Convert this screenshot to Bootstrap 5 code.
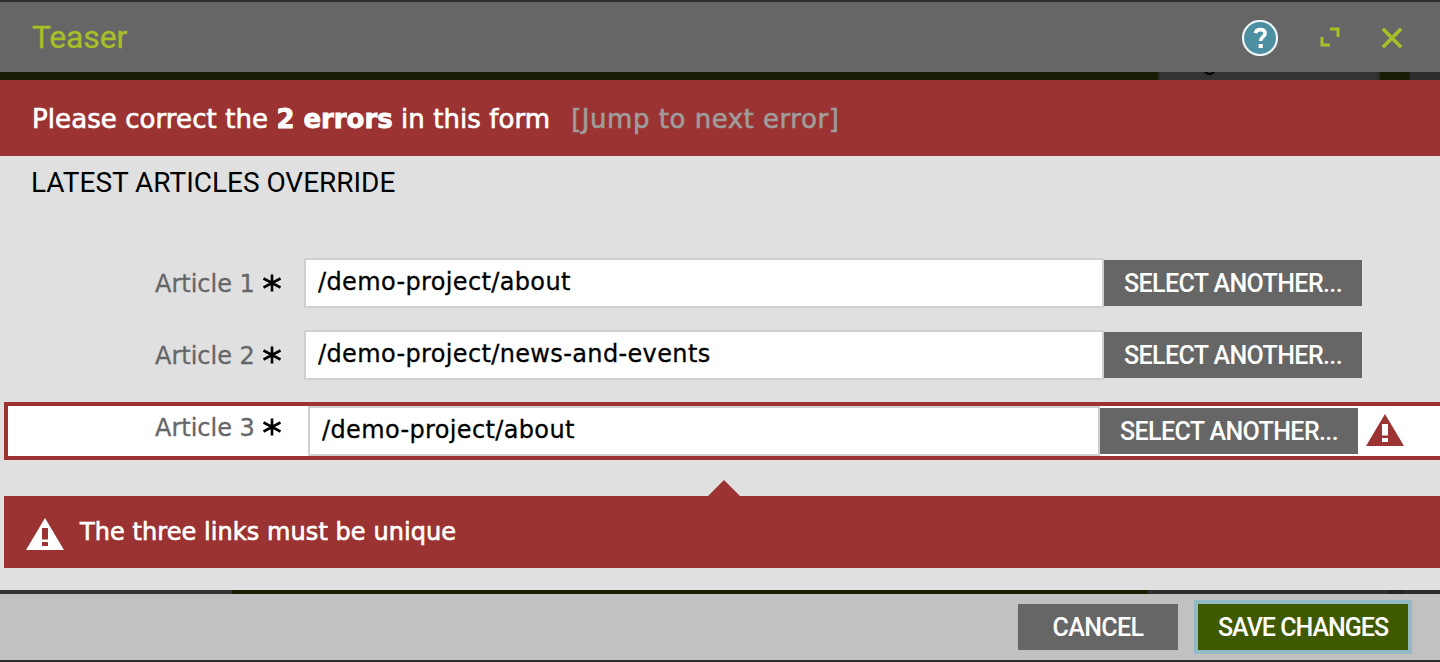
<!DOCTYPE html>
<html lang="en">
<head>
<meta charset="utf-8">
<title>Teaser</title>
<meta name="viewport" content="width=device-width, initial-scale=1">
<link href="https://cdn.jsdelivr.net/npm/bootstrap@5.3.0/dist/css/bootstrap.min.css" rel="stylesheet">
<style>
  :root { --brick: #9a3332; --steel: #666; --lime: #a8bf27; }
  body { font-family: "DejaVu Sans", Verdana, sans-serif; font-size: 24px; line-height: 30px; color: #000; background: #e0e0e0; height: 662px; overflow: hidden; }
  .din { font-family: Roboto, sans-serif; }
  .edge { height: 2px; background: #2d2d2d; }
  .dialog-head { height: 70px; background: var(--steel); padding: 2px 37px 0 32px; }
  .dialog-title { font-size: 32px; line-height: 40px; color: var(--lime); letter-spacing: -.2px; margin-top: -2px; -webkit-text-stroke: .3px currentColor; }
  .help-icon { margin-right: 42px; }
  .expand-icon { margin: 0 41px 3px 0; }
  .behind-top { height: 8px; background: linear-gradient(90deg, #161d02 0 1158px, #2b2b2b 1158px 1160px, #333 1160px 1378px, #2b2b2b 1378px 1380px, #161d02 1380px 1410px, #2d2d2d 1410px); }
  .behind-bottom { height: 4px; background: linear-gradient(90deg, #333 0 232px, #161d02 232px 1148px, #2e2e32 1148px 1388px, #242427 1388px 1404px, #2b2b2e 1404px); }
  .error-bar { height: 76px; background: var(--brick); padding: 2px 0 0 32px; font-size: 26px; letter-spacing: .08px; }
  .error-bar b { letter-spacing: -.05px; -webkit-text-stroke: .8px currentColor; }
  .sturdy { -webkit-text-stroke: .65px currentColor; }
  .jump { color: #a09c9b; margin-left: 21px; letter-spacing: .52px; -webkit-text-stroke: .6px currentColor; }
  .form-area { height: 434px; }
  .section-title { font-size: 28px; line-height: 34px; letter-spacing: -.02px; padding: 10px 0 0 31px; height: 102px; }
  .field-row { height: 50px; margin-bottom: 22px; }
  .field-label { width: 304px; padding: 2px 0 0 155px; color: var(--steel); gap: 8px; height: 50px; }
  .field-label span { -webkit-text-stroke: .3px currentColor; }
  .field-label svg { margin-top: -3px; }
  .field-input.form-control { width: 800px; height: 50px; border: 2px solid #d0d0d0; border-radius: 0; padding: 0 11px 2px 12px; font-size: 24px; letter-spacing: .36px; color: #000; background: #fff; -webkit-text-stroke: .3px currentColor; }
  .dlg-btn.btn { height: 46px; border: 0; border-radius: 0; padding: 1px 0 0; background: var(--steel); color: #fff; font: 500 25px/45px Roboto, sans-serif; letter-spacing: -.6px; white-space: nowrap; }
  .pick { width: 258px; }
  .field-row.bad { height: 58px; margin: 0 0 0 4px; border: 4px solid var(--brick); border-right: 0; background: #fff; }
  .bad .field-label { width: 300px; padding: 0 0 6px 147px; }
  .bad .field-input.form-control { width: 792px; }
  .bad-icon { color: var(--brick); margin-bottom: 2px; }
  .message { height: 72px; margin: 36px 0 0 4px; padding-left: 22px; background: var(--brick); color: #fff; letter-spacing: .07px; }
  .message::before { content: ""; position: absolute; left: 704px; top: -16px; border: 16px solid transparent; border-top: 0; border-bottom-color: var(--brick); }
  .dialog-foot { height: 66px; background: #c1c1c1; padding: 10px 32px 0 0; gap: 20px; }
  .cancel { width: 160px; }
  .dlg-btn.save { width: 210px; letter-spacing: -1px; background: #3e5900; box-shadow: 0 0 0 4px #93b9c4; }
</style>
</head>
<body>
<svg class="d-none">
  <symbol id="star" viewBox="0 0 18 18"><path d="M9 .5v17M.5 4.500l17 9M17.500 4.500L.5 13.500" fill="none" stroke="#000" stroke-width="2.6"/></symbol>
  <symbol id="warn" viewBox="0 0 38 32"><path fill="currentColor" fill-rule="evenodd" d="M19 0L38 32H0zM16 10v11.500h6V10zm0 14v4h6v-4z"/></symbol>
</svg>
<div class="d-flex flex-column">
  <div class="edge"></div>
  <header class="dialog-head d-flex align-items-center justify-content-between">
    <div class="dialog-title din">Teaser</div>
    <div class="d-flex align-items-center">
      <svg class="help-icon" width="36" height="36" viewBox="0 0 36 36"><circle cx="18" cy="18" r="17" fill="#4b8fa0" stroke="#edf4f6" stroke-width="2.2"/><path d="M13.500 13.200c.4-2.400 2.300-3.600 4.800-3.600 2.900 0 4.800 1.400 4.800 3.800 0 3.300-4.500 3.500-4.500 7.600" fill="none" stroke="#fff" stroke-width="3.6"/><path d="M16.600 24h4.200v4h-4.200z" fill="#fff"/></svg>
      <svg class="expand-icon" width="20" height="20" viewBox="0 0 20 20"><path d="M10 2h8v8M2 10v8h8" fill="none" stroke="#a8bf27" stroke-width="3"/></svg>
      <svg width="22" height="22" viewBox="0 0 22 22"><path d="M1.800 1.800l18.400 18.400M20.200 1.800L1.800 20.200" fill="none" stroke="#a8bf27" stroke-width="3.6"/></svg>
    </div>
  </header>
  <div class="behind-top"><svg class="d-block" width="1440" height="8"><path d="M1205 0q4.500 4 9 0" fill="none" stroke="#000" stroke-width="2"/></svg></div>
  <div class="error-bar d-flex align-items-center text-white">
    <span class="sturdy">Please correct the <b>2 errors</b> in this form</span><span class="jump">[Jump to next error]</span>
  </div>
  <main class="form-area">
    <div class="section-title din">LATEST ARTICLES OVERRIDE</div>
    <div class="field-row d-flex align-items-center">
      <label class="field-label d-flex align-items-center" for="a1"><span>Article 1</span><svg width="18" height="18"><use href="#star"/></svg></label>
      <input class="field-input form-control" id="a1" value="/demo-project/about">
      <button class="btn dlg-btn pick">SELECT ANOTHER...</button>
    </div>
    <div class="field-row d-flex align-items-center">
      <label class="field-label d-flex align-items-center" for="a2"><span>Article 2</span><svg width="18" height="18"><use href="#star"/></svg></label>
      <input class="field-input form-control" id="a2" value="/demo-project/news-and-events">
      <button class="btn dlg-btn pick">SELECT ANOTHER...</button>
    </div>
    <div class="field-row bad d-flex align-items-center">
      <label class="field-label d-flex align-items-center" for="a3"><span>Article 3</span><svg width="18" height="18"><use href="#star"/></svg></label>
      <input class="field-input form-control" id="a3" value="/demo-project/about">
      <button class="btn dlg-btn pick">SELECT ANOTHER...</button>
      <svg class="bad-icon ms-2" width="38" height="32"><use href="#warn"/></svg>
    </div>
    <div class="message position-relative d-flex align-items-center">
      <svg class="mt-1 me-3" width="38" height="32"><use href="#warn"/></svg><span class="sturdy">The three links must be unique</span>
    </div>
  </main>
  <div class="behind-bottom"></div>
  <footer class="dialog-foot d-flex justify-content-end">
    <button class="btn dlg-btn cancel">CANCEL</button>
    <button class="btn dlg-btn save">SAVE CHANGES</button>
  </footer>
  <div class="edge"></div>
</div>
<script src="https://cdn.jsdelivr.net/npm/bootstrap@5.3.0/dist/js/bootstrap.bundle.min.js"></script>
</body>
</html>
